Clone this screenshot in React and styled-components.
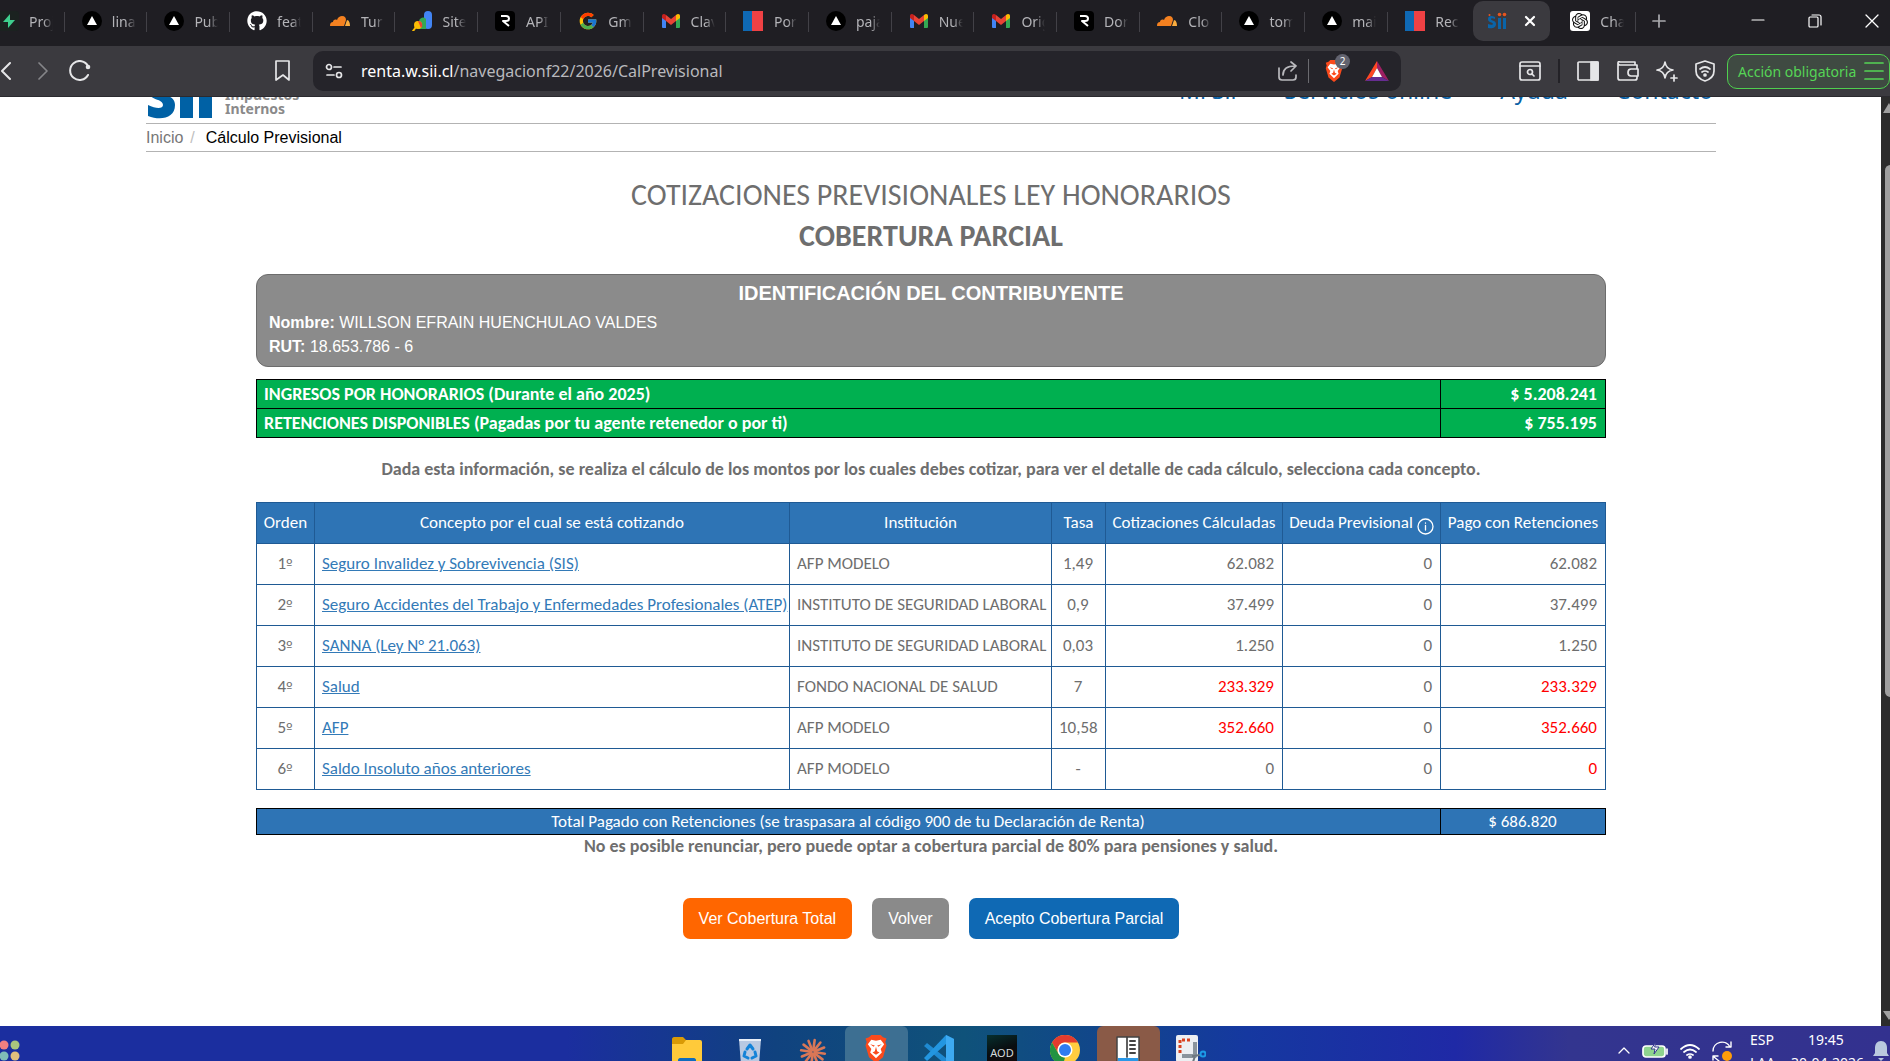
import React from "react";
import styled, { createGlobalStyle, css } from "styled-components";
import { FaGithub } from "react-icons/fa";
import { FcGoogle } from "react-icons/fc";
import { SiOpenai } from "react-icons/si";

const GlobalStyle = createGlobalStyle`
  *, *::before, *::after { box-sizing: border-box; }
  body { margin: 0; overflow: hidden; background: #fff; }
  button { border: 0; padding: 0; background: none; color: inherit; font: inherit; cursor: pointer; }
  svg { display: block; flex: none; }
`;

const ui = `"Noto Sans", "Open Sans", sans-serif`;
const arial = `"Liberation Sans", Arial, sans-serif`;
const calibri = `Calibri, Carlito, Lato, sans-serif`;

const Shell = styled.div`
  display: flex;
  flex-direction: column;
  height: 100vh;
  overflow: hidden;
  font-family: ${ui};
`;

/* ---------- browser tabs ---------- */

const TabBar = styled.header`
  display: flex;
  height: 46px;
  flex: none;
  background: #1f1e23;
  color: #b4b4b8;
`;

const TabList = styled.nav`
  display: grid;
  grid-template-columns: repeat(20, minmax(0, 1fr));
  flex: 1;
  margin-left: -18px;
  padding: 1px 0 5px;
`;

const Tab = styled.button`
  display: flex;
  align-items: center;
  gap: 10px;
  padding-left: 17px;
  font-size: 14px;
  position: relative;
  ${(p) =>
    p.$line &&
    css`
      &::after {
        content: "";
        position: absolute;
        right: 0;
        top: 11px;
        width: 1px;
        height: 20px;
        background: #424147;
      }
    `}
`;

const ActiveTab = styled.div`
  display: flex;
  align-items: center;
  justify-content: space-between;
  margin: 0 3px 0 2px;
  padding: 0 14px;
  border-radius: 10px;
  background: #3b3a3f;
  color: #fff;
`;

const TabText = styled.span`
  width: 24px;
  overflow: hidden;
  white-space: nowrap;
  mask-image: linear-gradient(90deg, #000 60%, transparent);
`;

const WindowControls = styled.div`
  display: grid;
  grid-template-columns: 46px 1fr 57px 57px 57px;
  width: 264px;
  margin-right: -10px;
  padding-bottom: 5px;
  color: #fff;
`;

const IconButton = styled.button`
  display: flex;
  align-items: center;
  justify-content: center;
  color: ${(p) => p.$color || "inherit"};
`;

/* ---------- address bar ---------- */

const Toolbar = styled.div`
  display: flex;
  align-items: center;
  flex: none;
  height: 51px;
  background: #3b3a3f;
  border-bottom: 1px solid #2b2a2f;
  color: #e6e6e8;
`;

const NavButtons = styled.div`
  display: grid;
  grid-template-columns: 22px 40px 36px 1fr 60px;
  width: 313px;
  flex: none;
`;

const AddressBox = styled.div`
  display: flex;
  align-items: center;
  flex: 1;
  height: 40px;
  padding: 0 12px;
  border-radius: 10px;
  background: #25242a;
`;

const Address = styled.div`
  flex: 1;
  padding-left: 18px;
  font-size: 16px;
  color: #b9b9bd;
  white-space: nowrap;
  b { font-weight: 400; color: #fff; }
`;

const AddressTools = styled.div`
  display: flex;
  align-items: center;
  gap: 10px;
`;

const Divider = styled.span`
  width: ${(p) => p.$w || 1}px;
  height: 24px;
  background: ${(p) => p.$color || "#6b6b70"};
`;

const Shield = styled.button`
  position: relative;
  display: flex;
  margin: 0 10px 0 4px;
  color: #ff5a1f;
`;

const Count = styled.span`
  position: absolute;
  top: -6px;
  left: 12px;
  width: 15px;
  height: 15px;
  border-radius: 8px;
  background: #62636f;
  color: #fff;
  font-size: 10px;
  line-height: 15px;
  text-align: center;
`;

const ToolGroup = styled.div`
  display: flex;
  align-items: center;
  justify-content: space-between;
  width: 196px;
  margin: 0 12px 0 118px;
`;

const ActionButton = styled.button`
  display: flex;
  align-items: center;
  justify-content: space-between;
  width: 163px;
  height: 35px;
  padding: 0 5px 0 10px;
  border: 1px solid #4fd04f;
  border-radius: 10px;
  background: #3f4a42;
  color: #56d556;
  font-size: 14px;
  white-space: nowrap;
`;

/* ---------- page ---------- */

const Viewport = styled.div`
  display: flex;
  flex: 1;
  min-height: 0;
`;

const Page = styled.main`
  flex: 1;
  padding: 0 165px 0 146px;
  overflow: hidden;
  background: #fff;
  color: #6e6e6e;
`;

const Scrollbar = styled.div`
  display: flex;
  flex-direction: column;
  justify-content: space-between;
  width: 9px;
  overflow: hidden;
  background: #2c2c2c;
`;

const Thumb = styled.div`
  flex: 1;
  margin: 52px -6px 313px 4px;
  border-radius: 7px;
  background: #9f9f9f;
`;

const SiteHeader = styled.div`
  display: flex;
  justify-content: space-between;
  align-items: flex-end;
  height: 60px;
  margin-top: -33px;
  padding: 0 3px 4px 1px;
  border-bottom: 1px solid #b3b3b3;
`;

const Brand = styled.a`
  display: flex;
  align-items: flex-end;
  gap: 12px;
  color: #8a8a8a;
  font-size: 14px;
  font-weight: 700;
  line-height: 14px;
  text-decoration: none;
  span { padding-bottom: 3px; }
`;

const SiteNav = styled.nav`
  display: flex;
  align-self: flex-start;
  gap: 48px;
  padding-top: 10px;
  font-size: 23px;
  line-height: 32px;
  a { color: #0a62a5; text-decoration: none; }
`;

const Breadcrumb = styled.nav`
  display: flex;
  gap: 7px;
  height: 28px;
  border-bottom: 1px solid #b3b3b3;
  font: 16px/28px ${arial};
  color: #c0c0c0;
  a { color: #777; text-decoration: none; }
  strong { margin-left: 4px; color: #000; font-weight: 400; }
`;

const Content = styled.section`
  margin: 0 110px;
  font-family: ${calibri};
`;

const Title = styled.h1`
  margin: 22px 0 0;
  font-size: 30px;
  font-weight: ${(p) => (p.$bold ? 700 : 400)};
  line-height: 41px;
  text-align: center;
  & + & { margin-top: 0; }
`;

const IdBox = styled.div`
  height: 93px;
  margin-top: 18px;
  padding: 4px 12px;
  border: 1px solid #6c6c6c;
  border-radius: 12px;
  background: #8b8b8b;
  color: #fff;
  font: 16px/24px ${arial};
  h2 { margin: 0 0 4px; font-size: 20px; line-height: 28px; text-align: center; }
  p { margin: 0; }
`;

const Table = styled.table`
  width: 100%;
  border-collapse: collapse;
  table-layout: fixed;
  font-size: 17px;
`;

const SumTable = styled(Table)`
  margin-top: ${(p) => p.$top}px;
  background: ${(p) => p.$bg};
  color: #fff;
  font-size: ${(p) => (p.$bold ? 18 : 17)}px;
  td {
    height: ${(p) => p.$row}px;
    padding: 0 8px 0 7px;
    border: 1px solid #000;
    line-height: 20px;
    font-weight: ${(p) => (p.$bold ? 700 : 400)};
    text-align: ${(p) => (p.$center ? "center" : "left")};
  }
  td + td { text-align: ${(p) => (p.$center ? "center" : "right")}; }
`;

const Lead = styled.p`
  margin: ${(p) => p.$top}px 0 0;
  font-size: 18px;
  font-weight: 700;
  line-height: 22px;
  text-align: center;
`;

const DataTable = styled(Table)`
  margin-top: 22px;
  th, td {
    height: 41px;
    padding: 0 8px 2px 7px;
    border: 1px solid #1f5a94;
    font-weight: 400;
    white-space: nowrap;
  }
  th { padding: 0 0 2px; background: #2e74b5; color: #fff; }
`;

const Cell = styled.td`
  text-align: ${(p) => p.$align || "left"};
  color: ${(p) => (p.$red ? "#ff0000" : "inherit")};
  a { color: #337ab7; text-decoration: underline; }
`;

const Ordinal = styled.span`
  font-family: "DejaVu Sans", sans-serif;
  font-size: 14px;
  line-height: 16px;
`;

const WithInfo = styled.span`
  display: flex;
  justify-content: center;
  gap: 4px;
  svg { margin-top: 6px; margin-bottom: -2px; }
`;

const Actions = styled.div`
  display: flex;
  justify-content: center;
  gap: 20px;
  margin-top: 41px;
`;

const Action = styled.button`
  height: 41px;
  padding: 0 16px;
  border-radius: 7px;
  background: ${(p) => p.$bg};
  color: #fff;
  font: 16px/24px ${arial};
`;

/* ---------- task bar ---------- */

const Taskbar = styled.footer`
  display: grid;
  grid-template-columns: 1fr auto 1fr;
  flex: none;
  height: 35px;
  padding-right: 12px;
  overflow: hidden;
  background: linear-gradient(90deg, #1b2e9f 0%, #1b2e9f 30%, #10427f 41%, #0f527a 51%, #12438f 60%, #1538a0 66%, #1f29a6 77%, #33358f 83%, #33318f 100%);
  color: #fff;
`;

const Apps = styled.div`
  display: grid;
  grid-template-columns: repeat(9, 63px);
`;

const AppTile = styled.button`
  display: flex;
  justify-content: center;
  align-items: flex-start;
  height: 35px;
  padding-top: 9px;
  border-radius: 6px 6px 0 0;
  background: ${(p) => p.$bg || "none"};
`;

const AodTile = styled.span`
  width: 30px;
  height: 30px;
  background: linear-gradient(160deg, #06302f, #090d10 50%, #14090b);
  color: #d5dada;
  font-size: 11px;
  line-height: 36px;
  text-align: center;
`;

const Tray = styled.div`
  display: flex;
  justify-content: flex-end;
  align-items: flex-start;
  margin-right: -12px;
  overflow: hidden;
`;

const TrayIcons = styled.div`
  display: flex;
  align-items: center;
  gap: 12px;
  padding: 15px 18px 0 0;
`;

const TrayText = styled.div`
  width: ${(p) => p.$w}px;
  padding-top: 2px;
  font-size: 14px;
  line-height: 23px;
  white-space: nowrap;
  text-align: ${(p) => p.$align || "left"};
`;

const TimeRow = styled.div`
  text-align: center;
`;

const Bell = styled.div`
  padding: 15px 1px 0 9px;
`;

/* ---------- drawings ---------- */

const S = ({ w = 20, h = w, vb, children, ...rest }) => (
  <svg width={w} height={h} viewBox={vb || `0 0 ${w} ${h}`} fill="none" stroke="currentColor" strokeWidth="1.7" strokeLinecap="round" strokeLinejoin="round" {...rest}>
    {children}
  </svg>
);

const Supabase = () => (
  <S stroke="none"><rect width="20" height="20" rx="3" fill="#1b2220" /><path d="M11 3 4 11h5v6l7-8h-5z" fill="#3ecf8e" /></S>
);
const Vercel = () => (
  <S stroke="none"><circle cx="10" cy="10" r="10" fill="#000" /><path d="m10 5 5 9H5z" fill="#fff" /></S>
);
const Cloud = () => (
  <S stroke="none">
    <path d="M0 15c0-3 1-4 3-4 0-2 2-3 4-2 1-3 3-4 5-4 3 0 4 2 4 4l-2 6z" fill="#f48120" />
    <path d="M15 15 17 9c2 0 3 3 3 6z" fill="#faad3f" />
  </S>
);
const SearchConsole = () => (
  <S stroke="none">
    <rect x="12" y="0" width="8" height="18" rx="4" fill="#4285f4" />
    <path d="M7 10a4 4 0 0 1 7-2v10H7z" fill="#34a853" />
    <circle cx="6" cy="14" r="4" fill="#fbbc04" /><path d="M6 10a4 4 0 0 1 3 7z" fill="#ea4335" />
    <path d="m4 16-3 4" stroke="#fbbc04" strokeWidth="2" />
  </S>
);
const Resend = () => (
  <S><rect width="20" height="20" rx="4" fill="#000" stroke="none" /><path d="M6 5h5c4 0 4 5 0 5H8l6 5" stroke="#fff" strokeWidth="2" strokeLinecap="butt" /></S>
);
const Gmail = () => (
  <S stroke="none">
    <path d="M1 6v10a1 1 0 0 0 1 1h3V8z" fill="#4285f4" />
    <path d="M19 6v10a1 1 0 0 1-1 1h-3V8z" fill="#34a853" />
    <path d="M5 4v6l5 4 5-4V4l-5 4z" fill="#ea4335" />
    <path d="M1 5c0-2 2-3 4-1v6L1 7z" fill="#c5221f" />
    <path d="M19 5c0-2-2-3-4-1v6l4-3z" fill="#fbbc04" />
  </S>
);
const Gob = () => (
  <S stroke="none"><path d="M0 0h9v20H0z" fill="#0f69b4" /><path d="M9 0h11v20H9z" fill="#ef4144" /></S>
);
const SiiTab = () => (
  <S stroke="none">
    <path d="M8 6C4 4 1 5 1 8c0 4 5 3 5 5 0 1-3 1-5 0v4c4 1 8 0 8-4 0-4-5-3-5-5 0-1 2-1 4 0zM11 7h3v11h-3zM16 7h3v11h-3z" fill="#0a64a8" />
    <circle cx="12.500" cy="3.500" r="1.800" fill="#e8551e" /><circle cx="17.500" cy="3.500" r="1.800" fill="#e8551e" />
    <circle cx="2.500" cy="4" r="1" fill="#e8551e" />
  </S>
);
const OpenAI = () => (
  <S stroke="none"><rect width="20" height="20" rx="3" fill="#fff" /><SiOpenai x="2" y="2" size={16} color="#111" /></S>
);
const SiiLogo = () => (
  <S w={66} h={40} stroke="none">
    <path d="M26 3C12-3 1 3 1 11c0 11 15 8 15 15 0 4-7 4-15 0v11c13 5 27 2 27-11C28 15 13 17 13 12c0-3 6-3 13 0zM33 10h13v29H33zM52 10h13v29H52z" fill="#0061a5" />
  </S>
);
const InfoIcon = () => (
  <S w={17} stroke="#fff" strokeWidth="1.300"><circle cx="8.500" cy="8.500" r="7.500" /><path d="M8.500 7.500v4.500M8.500 5v.2" /></S>
);
const Lion = ({ size }) => (
  <S w={size} h={size} vb="0 0 24 24" stroke="none">
    <path d="m8 0-2 2-3 1 1 3-1 3 3 10 6 5 6-5 3-10-1-3 1-3-3-1-2-2z" fill="#fb4a1c" />
    <path d="m8 4-3 4 3 4-1 3 5 5 5-5-1-3 3-4-3-4-4 1z" fill="#fff" />
    <path d="m7 8 4 1-1 1zM17 8l-4 1 1 1zM12 10l1 4 2 1-3 2-3-2 2-1z" fill="#fb4a1c" />
  </S>
);
const Folder = () => (
  <S w={30} h={30} stroke="none">
    <path d="M0 4c0-1 1-2 2-2h9l3 3h14v10H0z" fill="#d99a06" /><path d="M0 9h11l3-4h14a2 2 0 0 1 2 2v23H0z" fill="#ffca3a" />
    <path d="M6 30v-5c0-1 1-2 2-2h14c1 0 2 1 2 2v5z" fill="#0f6cbd" />
  </S>
);
const Recycle = () => (
  <S w={24} h={30} stroke="none">
    <path d="M1 4h22l-2 26H3z" fill="#b9c9e2" /><path d="M1 4h22v2H1z" fill="#e8eef7" />
    <path d="m9 14 3-4 3 4M17 17l1 4-4 2M7 17l-1 4 4 2" stroke="#1583d8" strokeWidth="3" />
  </S>
);
const Burst = () => (
  <S w={28} h={30} stroke="#d97757" strokeWidth="2.600">
    {[0, 30, 60, 90, 120, 150, 180, 210, 240, 270, 300, 330].map((a) => (
      <path key={a} d="M14 15V5" transform={`rotate(${a + 8} 14 17)`} />
    ))}
  </S>
);
const Code = () => (
  <S w={30} h={30} stroke="none">
    <path d="m22 0 8 4v22l-8 4L0 11l3-3 19 15z" fill="#1f8ad2" />
    <path d="M22 0v9L3 26l-3-3z" fill="#2396e0" /><path d="m22 0 8 4v22l-8 4z" fill="#3daaf2" />
  </S>
);
const Chrome = () => (
  <S w={30} h={30} stroke="none">
    <circle cx="15" cy="15" r="15" fill="#ffcd40" />
    <path d="M2 7.500A15 15 0 0 1 28 7.500H15a7.500 7.500 0 0 0-6.500 11.250z" fill="#e33b2e" />
    <path d="M2 7.500 8.500 18.750A7.500 7.500 0 0 0 15 22.500L13 30A15 15 0 0 1 2 7.500z" fill="#229342" />
    <circle cx="15" cy="15" r="7.500" fill="#fff" /><circle cx="15" cy="15" r="6" fill="#2f7cf0" />
  </S>
);
const Pages = () => (
  <S w={24} h={30} stroke="none">
    <path d="M1 2h22v28H1z" fill="#fff" stroke="#444" strokeWidth="1.500" />
    <path d="M11 2v20" stroke="#444" /><path d="M14 6h5M14 10h5M14 14h5M14 18h5" stroke="#444" strokeWidth="2" />
    <path d="M2 23h20v3H2z" fill="#2a98e8" />
  </S>
);
const Snip = () => (
  <S w={30} h={30} stroke="none">
    <rect width="22" height="27" rx="2" fill="#eceff2" />
    <path d="M4 18V5h12" stroke="#d9411e" strokeWidth="3" strokeDasharray="3 2" strokeLinecap="butt" />
    <path d="M19 7v14H6" stroke="#8a949c" strokeWidth="4" strokeLinecap="butt" />
    <path d="m17 21 7-1M19 21l-3 9" stroke="#6d777f" strokeWidth="2" /><circle cx="27" cy="19" r="2.500" stroke="#1c9be6" strokeWidth="2" /><path d="M14 29h4" stroke="#1c9be6" strokeWidth="3" />
  </S>
);

/* ---------- data ---------- */

const tabs = [
  [Supabase, "Proj"], [Vercel, "lina"], [Vercel, "Pub"], [() => <FaGithub size={20} color="#fff" />, "feat"],
  [Cloud, "Tur"], [SearchConsole, "Site"], [Resend, "API"], [() => <FcGoogle size={20} />, "Gm"],
  [Gmail, "Clav"], [Gob, "Por"], [Vercel, "paja"], [Gmail, "Nue"], [Gmail, "Orig"], [Resend, "Dor"],
  [Cloud, "Clo"], [Vercel, "tom"], [Vercel, "mai"], [Gob, "Rec"], null, [OpenAI, "Cha"],
];

const cols = [
  ["Orden", 58], ["Concepto por el cual se está cotizando"], ["Institución", 262], ["Tasa", 54],
  ["Cotizaciones Cálculadas", 177], ["Deuda Previsional", 158], ["Pago con Retenciones", 165],
];

const rows = [
  ["1", "Seguro Invalidez y Sobrevivencia (SIS)", "AFP MODELO", "1,49", "62.082", "0", "62.082"],
  ["2", "Seguro Accidentes del Trabajo y Enfermedades Profesionales (ATEP)", "INSTITUTO DE SEGURIDAD LABORAL", "0,9", "37.499", "0", "37.499"],
  ["3", "SANNA (Ley N° 21.063)", "INSTITUTO DE SEGURIDAD LABORAL", "0,03", "1.250", "0", "1.250"],
  ["4", "Salud", "FONDO NACIONAL DE SALUD", "7", "233.329", "0", "233.329", true, true],
  ["5", "AFP", "AFP MODELO", "10,58", "352.660", "0", "352.660", true, true],
  ["6", "Saldo Insoluto años anteriores", "AFP MODELO", "-", "0", "0", "0", false, true],
];

export default function App() {
  return (
    <Shell>
      <GlobalStyle />
      <TabBar>
        <TabList>
          {tabs.map((t, i) => {
            if (!t)
              return (
                <ActiveTab key={i}>
                  <SiiTab />
                  <IconButton aria-label="Cerrar pestaña"><S w={12} strokeWidth="2.200"><path d="m2 2 8 8M10 2l-8 8" /></S></IconButton>
                </ActiveTab>
              );
            const [Icon, text] = t;
            return (
              <Tab key={i} $line={i !== 17}>
                <Icon />
                <TabText>{text}</TabText>
              </Tab>
            );
          })}
        </TabList>
        <WindowControls>
          <IconButton aria-label="Nueva pestaña" $color="#a9a9ad"><S w={14}><path d="M7 1v12M1 7h12" /></S></IconButton>
          <span />
          <IconButton aria-label="Minimizar"><S w={14} strokeWidth="1.200"><path d="M1 6h12" /></S></IconButton>
          <IconButton aria-label="Restaurar"><S w={14} strokeWidth="1.200"><rect x="1" y="3" width="9" height="10" rx="1" /><path d="M4 1h7q2 0 2 2v8" /></S></IconButton>
          <IconButton aria-label="Cerrar"><S w={14} strokeWidth="1.300"><path d="m1 1 12 12M13 1 1 13" /></S></IconButton>
        </WindowControls>
      </TabBar>

      <Toolbar>
        <NavButtons>
          <IconButton aria-label="Atrás"><S w={20} strokeWidth="2"><path d="m9 2-8 8 8 8" /></S></IconButton>
          <IconButton aria-label="Adelante" $color="#858589"><S w={20}><path d="m7 2 8 8-8 8" /></S></IconButton>
          <IconButton aria-label="Recargar"><S w={22} strokeWidth="2"><path d="M19 15A9.500 9.500 0 1 1 19 6" /><circle cx="19" cy="7" r="2.300" fill="currentColor" stroke="none" /></S></IconButton>
          <span />
          <IconButton aria-label="Marcador"><S w={20} h={22}><path d="M3 1h13v19l-6-5-7 5z" /></S></IconButton>
        </NavButtons>
        <AddressBox>
          <S w={18}><circle cx="4" cy="5" r="2.500" /><path d="M9 5h7M2 13h7" /><circle cx="14" cy="13" r="2.500" /></S>
          <Address><b>renta.w.sii.cl</b>/navegacionf22/2026/CalPrevisional</Address>
          <AddressTools>
            <IconButton aria-label="Compartir" $color="#b9b9bd"><S w={20}><path d="M1 7v9q0 3 3 3h11q3 0 3-3v-2M5 14c0-6 4-9 12-9M13 1l5 4-5 5" /></S></IconButton>
            <Divider />
            <Shield aria-label="Escudos"><Lion size={22} /><Count>2</Count></Shield>
            <IconButton aria-label="Recompensas">
              <S w={24} h={20} stroke="none"><path d="M12 0 0 20l7-4 5-9z" fill="#ff4724" /><path d="m12 0 12 20-7-4-5-9z" fill="#9e1f63" /><path d="M0 20h24l-7-4H7z" fill="#662d91" /><path d="m12 7 5 9H7z" fill="#fff" /></S>
            </IconButton>
          </AddressTools>
        </AddressBox>
        <ToolGroup>
          <IconButton aria-label="Buscar en la página"><S w={22} h={20}><rect x="1" y="1" width="20" height="18" rx="2" /><path d="M1 5h20" /><circle cx="11" cy="11" r="2.500" /><path d="m13 13 2 2" /></S></IconButton>
          <Divider $w={2} $color="#232227" />
          <IconButton aria-label="Barra lateral"><S w={22} h={20}><rect x="1" y="1" width="20" height="18" rx="1" /><path d="M14 1h7v18h-7z" fill="currentColor" /></S></IconButton>
          <IconButton aria-label="Billetera"><S w={22} h={20}><path d="M20 8V4H3q-2 0-2-2t2-1h15v3M1 2v15q0 2 2 2h15q2 0 2-2v-2M21 8v7h-7q-3 0-3-3.500T14 8z" /></S></IconButton>
          <IconButton aria-label="Asistente"><S w={22}><path d="M9 2q1 7 8 8-7 1-8 8-1-7-8-8 7-1 8-8zM18 15v6M15 18h6" /></S></IconButton>
          <IconButton aria-label="VPN"><S w={20} h={22}><path d="M10 1 1 4v7q0 7 9 10 9-3 9-10V4z" /><path d="M5 9q5-4 10 0M7 12q3-2 6 0" /><circle cx="10" cy="15" r="1" fill="currentColor" /></S></IconButton>
        </ToolGroup>
        <ActionButton>
          Acción obligatoria
          <S w={20} h={20}><path d="M1 2h18M1 10h18M1 18h18" /></S>
        </ActionButton>
      </Toolbar>

      <Viewport>
        <Page>
          <SiteHeader>
            <Brand href="#inicio"><SiiLogo /><span>Impuestos<br />Internos</span></Brand>
            <SiteNav>
              <a href="#misii">Mi Sii</a>
              <a href="#servicios">Servicios online</a>
              <a href="#ayuda">Ayuda</a>
              <a href="#contacto">Contacto</a>
            </SiteNav>
          </SiteHeader>
          <Breadcrumb><a href="#inicio">Inicio</a>/<strong>Cálculo Previsional</strong></Breadcrumb>
          <Content>
            <Title>COTIZACIONES PREVISIONALES LEY HONORARIOS</Title>
            <Title as="h2" $bold>COBERTURA PARCIAL</Title>
            <IdBox>
              <h2>IDENTIFICACIÓN DEL CONTRIBUYENTE</h2>
              <p><b>Nombre:</b> WILLSON EFRAIN HUENCHULAO VALDES</p>
              <p><b>RUT:</b> 18.653.786 - 6</p>
            </IdBox>
            <SumTable $top={12} $row={29} $bg="#00b050" $bold>
              <colgroup><col /><col width="165" /></colgroup>
              <tbody>
                <tr><td>INGRESOS POR HONORARIOS (Durante el año 2025)</td><td>$ 5.208.241</td></tr>
                <tr><td>RETENCIONES DISPONIBLES (Pagadas por tu agente retenedor o por ti)</td><td>$ 755.195</td></tr>
              </tbody>
            </SumTable>
            <Lead $top={20}>Dada esta información, se realiza el cálculo de los montos por los cuales debes cotizar, para ver el detalle de cada cálculo, selecciona cada concepto.</Lead>
            <DataTable>
              <colgroup>{cols.map(([name, w]) => <col key={name} width={w} />)}</colgroup>
              <thead>
                <tr>{cols.map(([name]) => <th key={name} scope="col">{name === "Deuda Previsional" ? <WithInfo>{name}<InfoIcon /></WithInfo> : name}</th>)}</tr>
              </thead>
              <tbody>
                {rows.map((r) => (
                  <tr key={r[0]}>
                    <Cell $align="center">{r[0]}<Ordinal>º</Ordinal></Cell>
                    <Cell><a href="#detalle">{r[1]}</a></Cell>
                    <Cell>{r[2]}</Cell>
                    <Cell $align="center">{r[3]}</Cell>
                    <Cell $align="right" $red={r[7]}>{r[4]}</Cell>
                    <Cell $align="right">{r[5]}</Cell>
                    <Cell $align="right" $red={r[8]}>{r[6]}</Cell>
                  </tr>
                ))}
              </tbody>
            </DataTable>
            <SumTable $top={18} $row={26} $bg="#2e74b5" $center>
              <colgroup><col /><col width="165" /></colgroup>
              <tbody>
                <tr><td>Total Pagado con Retenciones (se traspasara al código 900 de tu Declaración de Renta)</td><td>$ 686.820</td></tr>
              </tbody>
            </SumTable>
            <Lead $top={0}>No es posible renunciar, pero puede optar a cobertura parcial de 80% para pensiones y salud.</Lead>
            <Actions>
              <Action $bg="#ff6600">Ver Cobertura Total</Action>
              <Action $bg="#8a8a8a">Volver</Action>
              <Action $bg="#0f69b4">Acepto Cobertura Parcial</Action>
            </Actions>
          </Content>
        </Page>
        <Scrollbar>
          <S w={12} h={16} stroke="none"><path d="m8 6 6 10H2z" fill="#a0a0a0" /></S>
          <Thumb />
          <S w={12} h={16} stroke="none"><path d="m2 1 6 9 6-9z" fill="#a0a0a0" /></S>
        </Scrollbar>
      </Viewport>

      <Taskbar>
        <S w={20} h={35} stroke="none">
          <circle cx="4" cy="19" r="4.500" fill="#f07f80" /><circle cx="15" cy="19" r="4.500" fill="#a9c47e" />
          <circle cx="4" cy="30" r="4.500" fill="#7fbdb8" /><circle cx="15" cy="30" r="4.500" fill="#e2bf7d" />
        </S>
        <Apps>
          <AppTile aria-label="Archivos"><Folder /></AppTile>
          <AppTile aria-label="Papelera"><Recycle /></AppTile>
          <AppTile aria-label="Claude"><Burst /></AppTile>
          <AppTile aria-label="Brave" $bg="#3d6f92"><Lion size={28} /></AppTile>
          <AppTile aria-label="Código"><Code /></AppTile>
          <AppTile><AodTile>AOD</AodTile></AppTile>
          <AppTile aria-label="Chrome"><Chrome /></AppTile>
          <AppTile aria-label="Documentos" $bg="#8a5a47"><Pages /></AppTile>
          <AppTile aria-label="Recortes"><Snip /></AppTile>
        </Apps>
        <Tray>
          <TrayIcons>
            <S w={12} h={20} strokeWidth="1.300"><path d="m1 12 5-5 5 5" /></S>
            <S w={26} h={20}><rect x="1" y="5" width="22" height="11" rx="3" fill="#8fd48f" /><path d="M25 8v5" /><path d="m14 1-5 7h4l-1 5 5-7h-4z" fill="#fff" stroke="#33358f" strokeWidth="1" /></S>
            <S w={20} h={20}><path d="M1 8q9-8 18 0M4 11q6-5 12 0M7 14q3-2 6 0" /><circle cx="10" cy="16" r="1" fill="currentColor" /></S>
            <S w={20} h={20} strokeWidth="1.400"><path d="M1 10A9 9 0 0 1 18 6M19 1v5h-5M1 19v-4h5M2 16l5 4" /><circle cx="15" cy="15" r="5" fill="#ff9d0a" stroke="none" /></S>
          </TrayIcons>
          <TrayText $w={38}>ESP<br />LAA</TrayText>
          <TrayText $w={76} $align="right"><TimeRow>19:45</TimeRow>30-04-2026</TrayText>
          <Bell><S w={16} h={20} stroke="none"><path d="M8 0c4 0 6 3 6 7v5l2 3H0l2-3V7c0-4 2-7 6-7zM5 17h6l-3 3z" fill="#b9c9de" /></S></Bell>
        </Tray>
      </Taskbar>
    </Shell>
  );
}
